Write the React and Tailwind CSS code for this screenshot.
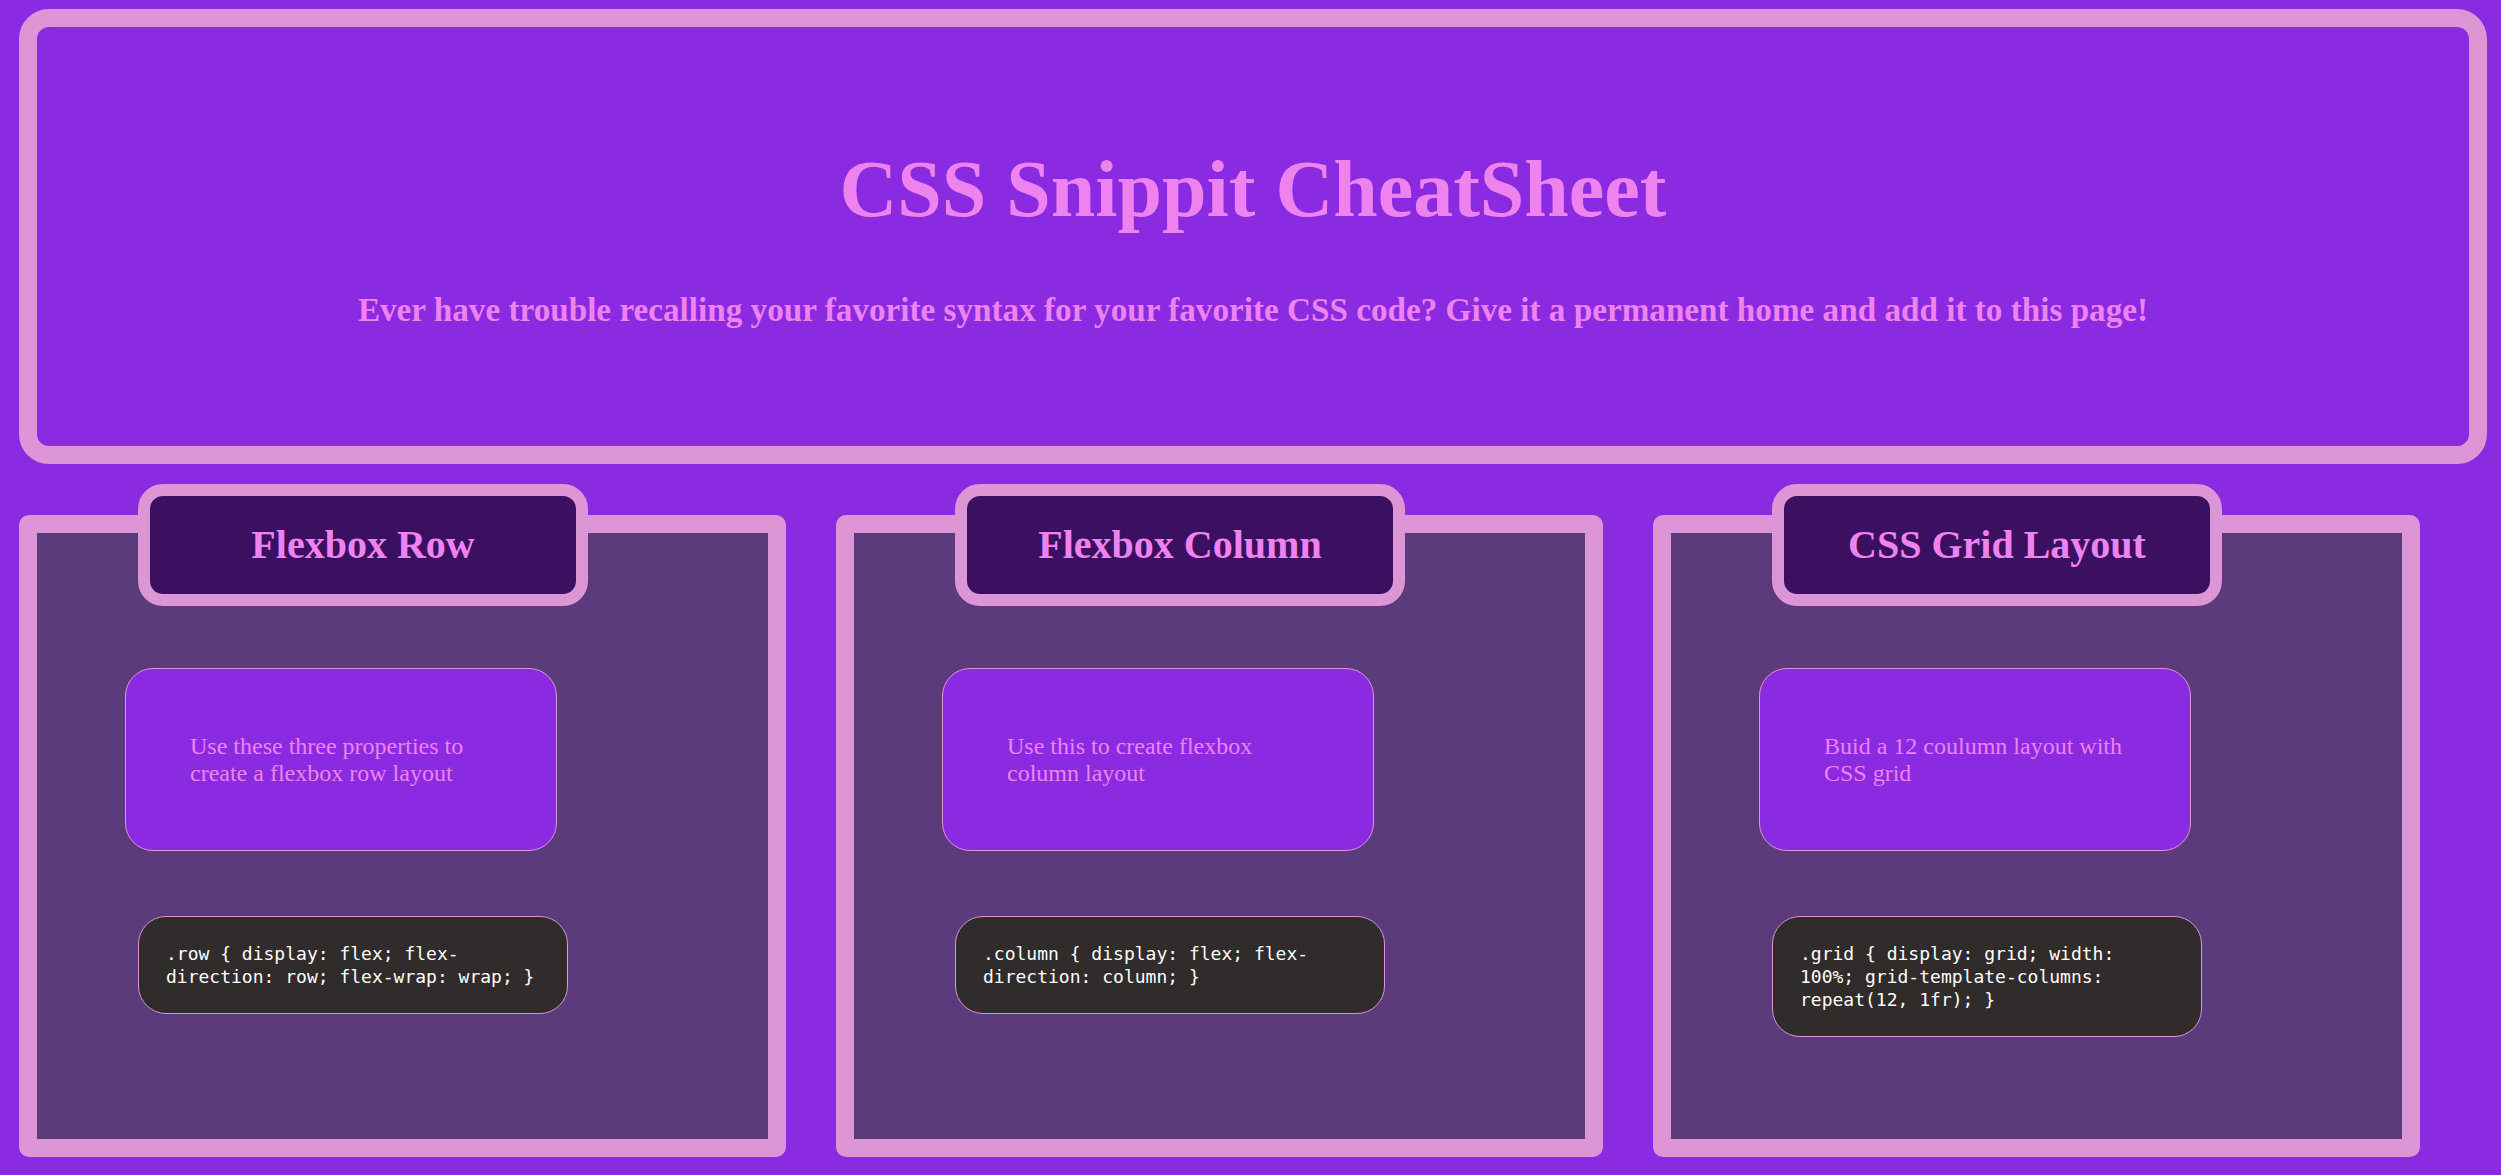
const snippets = [
  {
    title: "Flexbox Row",
    info: "Use these three properties to create a flexbox row layout",
    code: ".row { display: flex; flex-direction: row; flex-wrap: wrap; }",
  },
  {
    title: "Flexbox Column",
    info: "Use this to create flexbox column layout",
    code: ".column { display: flex; flex-direction: column; }",
  },
  {
    title: "CSS Grid Layout",
    info: "Buid a 12 coulumn layout with CSS grid",
    code: ".grid { display: grid; width: 100%; grid-template-columns: repeat(12, 1fr); }",
  },
];

function SnippetCard({ title, info, code }) {
  return (
    <section className="w-[767px] h-[642px] border-[18px] border-[#dd96d5] rounded-[10px] bg-[#5b3b7b] flex flex-col items-start">
      {/* tab sits over the top border */}
      <div className="mt-[-49px] ml-[101px] w-[450px] h-[122px] border-[12px] border-[#dd96d5] rounded-[25px] bg-[#3b1060] flex items-center justify-center">
        <h2 className="text-[40px] leading-[46px] font-bold text-[#ee82ee]">{title}</h2>
      </div>
      <div className="mt-[62px] ml-[88px] w-[432px] h-[183px] border border-[#dd96d5] rounded-[28px] bg-[#8a2be2] pl-[64px] pr-[56px] flex items-center">
        <p className="text-[24px] leading-[27px] text-[#ee82ee]">{info}</p>
      </div>
      <div className="mt-[65px] ml-[101px] w-[430px] border border-[#dd96d5] rounded-[28px] bg-[#302c2b] px-[27px] py-[25px]">
        <code
          className="block text-[18px] leading-[23px] text-white"
          style={{ fontFamily: '"DejaVu Sans Mono", "Liberation Mono", monospace' }}
        >
          {code}
        </code>
      </div>
    </section>
  );
}

function App() {
  return (
    <div
      className="min-h-screen bg-[#8a2be2] pt-[9px] pl-[19px]"
      style={{ fontFamily: '"Liberation Serif", "Times New Roman", serif' }}
    >
      <header className="w-[2468px] h-[455px] border-[18px] border-[#dd96d5] rounded-[30px] flex flex-col items-center justify-center gap-[58px]">
        <h1 className="text-[80px] leading-[88px] font-bold text-[#ee82ee]">CSS Snippit CheatSheet</h1>
        <p className="text-[33.2px] leading-[37px] font-bold text-[#ee82ee]">
          Ever have trouble recalling your favorite syntax for your favorite CSS code? Give it a permanent home and add it to this page!
        </p>
      </header>

      <div className="flex gap-[50px] mt-[51px]">
        {snippets.map((s) => (
          <SnippetCard key={s.title} {...s} />
        ))}
      </div>
    </div>
  );
}

export default App;
